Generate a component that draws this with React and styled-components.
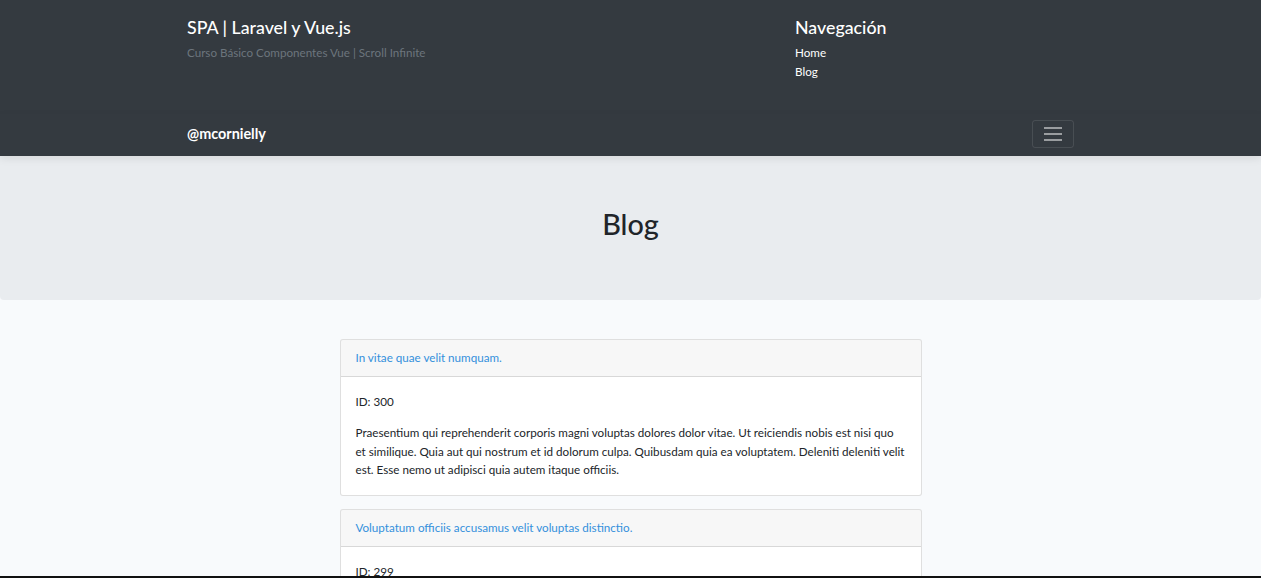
import React from "react";
import styled, { createGlobalStyle } from "styled-components";

const colors = {
  dark: "#343a40",
  muted: "#6c757d",
  light: "#e9ecef",
  body: "#f8fafc",
  text: "#212529",
  link: "#3490dc",
};

const posts = [
  {
    id: 300,
    title: "In vitae quae velit numquam.",
    body:
      "Praesentium qui reprehenderit corporis magni voluptas dolores dolor vitae. Ut reiciendis nobis est nisi quo et similique. Quia aut qui nostrum et id dolorum culpa. Quibusdam quia ea voluptatem. Deleniti deleniti velit est. Esse nemo ut adipisci quia autem itaque officiis.",
  },
  {
    id: 299,
    title: "Voluptatum officiis accusamus velit voluptas distinctio.",
    body:
      "Dolorem et vel ut quia. Sint rerum deserunt aut quibusdam voluptas. Possimus quo ut voluptatem nulla sit est.",
  },
];

const GlobalStyle = createGlobalStyle`
  html, body {
    margin: 0;
    padding: 0;
  }
  body {
    background: ${colors.body};
    color: ${colors.text};
    font-family: Lato, "Open Sans", sans-serif;
    font-size: 11.65px;
    line-height: 18.4px;
    overflow: hidden;
  }
  * {
    box-sizing: border-box;
  }
`;

const App = () => {
  return (
    <>
      <GlobalStyle />
      <Header>
        <Collapse>
          <Container>
            <About>
              <HeaderTitle>SPA | Laravel y Vue.js</HeaderTitle>
              <Muted>Curso Básico Componentes Vue | Scroll Infinite</Muted>
            </About>
            <Contact>
              <HeaderTitle>Navegación</HeaderTitle>
              <NavList>
                <li>
                  <NavLink href="#">Home</NavLink>
                </li>
                <li>
                  <NavLink href="#">Blog</NavLink>
                </li>
              </NavList>
            </Contact>
          </Container>
        </Collapse>
        <Navbar>
          <NavContainer>
            <Brand href="#">@mcornielly</Brand>
            <Toggler aria-label="Toggle navigation">
              <svg width="18" height="14" viewBox="0 0 18 14">
                <path
                  d="M0 1h18M0 7h18M0 13h18"
                  stroke="rgba(255,255,255,0.5)"
                  strokeWidth="2"
                />
              </svg>
            </Toggler>
          </NavContainer>
        </Navbar>
      </Header>

      <Jumbotron>
        <h1>Blog</h1>
      </Jumbotron>

      <Posts>
        {posts.map((post) => (
          <Card key={post.id}>
            <CardHeader>
              <a href="#">{post.title}</a>
            </CardHeader>
            <CardBody>
              <p>ID: {post.id}</p>
              <p>{post.body}</p>
            </CardBody>
          </Card>
        ))}
      </Posts>
      <ScreenEdge />
    </>
  );
};

const Header = styled.header``;

const Collapse = styled.div`
  background-color: ${colors.dark};
  padding: 17px 0 20px;
`;

const Container = styled.div`
  width: 887px;
  margin: 0 auto;
  display: grid;
  grid-template-columns: 1fr 279px;
`;

const About = styled.div``;

const Contact = styled.div``;

const HeaderTitle = styled.h4`
  margin: 0 0 6px;
  font-size: 17.8px;
  font-weight: 500;
  line-height: 1.2;
  color: #fff;
`;

const Muted = styled.p`
  margin: 0;
  color: ${colors.muted};
`;

const NavList = styled.ul`
  list-style: none;
  margin: 0 0 13px;
  padding: 0;
`;

const NavLink = styled.a`
  color: #fff;
  text-decoration: none;
`;

const Navbar = styled.div`
  background-color: ${colors.dark};
  padding: 6px 0 8px;
  box-shadow: 0 3px 8px rgba(0, 0, 0, 0.08);
  position: relative;
  z-index: 1;
`;

const NavContainer = styled.div`
  width: 887px;
  margin: 0 auto;
  display: flex;
  align-items: center;
  justify-content: space-between;
`;

const Brand = styled.a`
  color: #fff;
  font-weight: 700;
  font-size: 14.4px;
  line-height: 23px;
  margin-top: -2px;
  text-decoration: none;
`;

const Toggler = styled.button`
  width: 42px;
  height: 28px;
  display: flex;
  align-items: center;
  justify-content: center;
  background: transparent;
  border: 1px solid rgba(255, 255, 255, 0.1);
  border-radius: 3px;
  padding: 0;
`;

const Jumbotron = styled.section`
  background-color: ${colors.light};
  border-radius: 0 0 4px 4px;
  padding: 50px 26px 56px;
  text-align: center;

  h1 {
    margin: 0;
    font-size: 28.8px;
    font-weight: 500;
    line-height: 1.3;
    color: ${colors.text};
  }
`;

const Posts = styled.main`
  width: 582px;
  margin: 39px auto 0;
  display: flex;
  flex-direction: column;
  gap: 13px;
`;

const Card = styled.article`
  background: #fff;
  border: 1px solid rgba(0, 0, 0, 0.125);
  border-radius: 3px;
  overflow: hidden;
`;

const CardHeader = styled.div`
  background-color: rgba(0, 0, 0, 0.03);
  border-bottom: 1px solid rgba(0, 0, 0, 0.125);
  padding: 9px 15px;

  a {
    color: ${colors.link};
    text-decoration: none;
  }
`;

const CardBody = styled.div`
  padding: 16px 15px 15px;

  p {
    margin: 0 0 13px;
  }

  p:last-child {
    margin-bottom: 0;
  }
`;

const ScreenEdge = styled.div`
  position: fixed;
  left: 0;
  right: 0;
  bottom: 0;
  height: 2px;
  background: #111;
`;

export default App;
